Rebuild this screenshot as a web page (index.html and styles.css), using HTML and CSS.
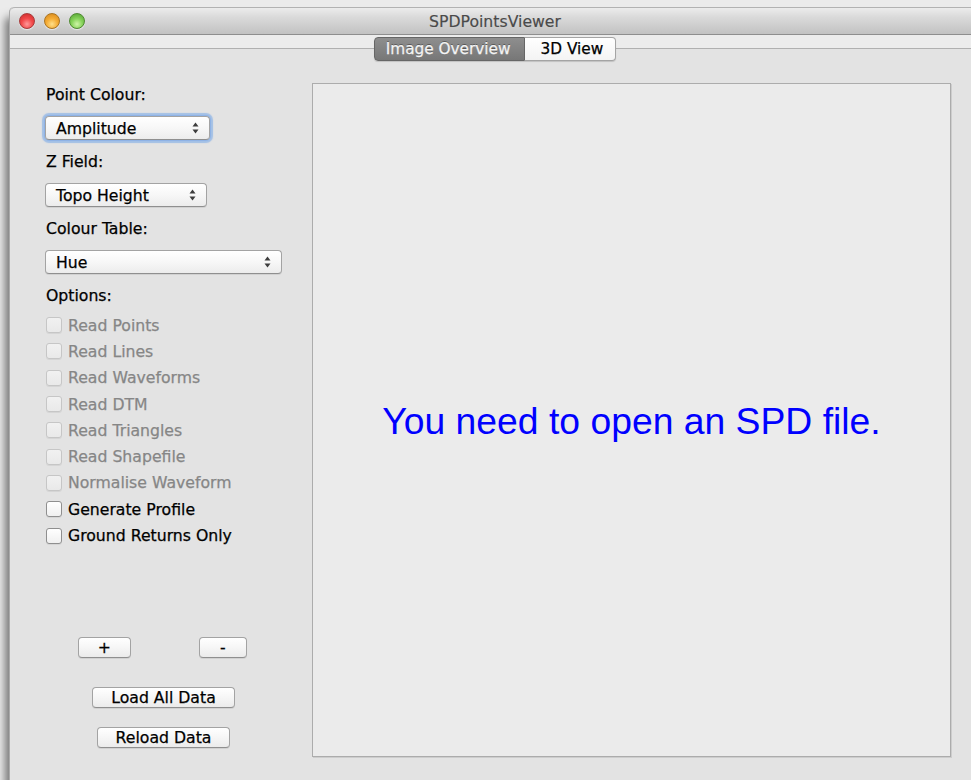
FILE: index.html
```html
<!DOCTYPE html>
<html lang="en">
<head>
<meta charset="utf-8">
<title>SPDPointsViewer</title>
<link rel="stylesheet" href="styles.css">
</head>
<body>
<div class="desktop">
  <div class="window">
    <header class="titlebar">
      <div class="lights">
        <span class="light close"></span>
        <span class="light minimise"></span>
        <span class="light zoom"></span>
      </div>
      <div class="title">SPDPointsViewer</div>
      <div></div>
    </header>

    <div class="tabstrip">
      <div class="tabs">
        <span class="tab active">Image Overview</span>
        <span class="tab">3D View</span>
      </div>
    </div>

    <main class="content">
      <aside class="controls">
        <div class="field-label">Point Colour:</div>
        <div class="popup focused w-amp">
          <span>Amplitude</span>
          <svg class="arrows" width="7" height="12" viewBox="0 0 7 12"><path d="M3.5 0.5 L6.5 4.5 H0.5 Z M3.5 11.5 L6.5 7.5 H0.5 Z" fill="#3c3c3c"/></svg>
        </div>

        <div class="field-label">Z Field:</div>
        <div class="popup w-topo">
          <span>Topo Height</span>
          <svg class="arrows" width="7" height="12" viewBox="0 0 7 12"><path d="M3.5 0.5 L6.5 4.5 H0.5 Z M3.5 11.5 L6.5 7.5 H0.5 Z" fill="#3c3c3c"/></svg>
        </div>

        <div class="field-label">Colour Table:</div>
        <div class="popup w-hue">
          <span>Hue</span>
          <svg class="arrows" width="7" height="12" viewBox="0 0 7 12"><path d="M3.5 0.5 L6.5 4.5 H0.5 Z M3.5 11.5 L6.5 7.5 H0.5 Z" fill="#3c3c3c"/></svg>
        </div>

        <div class="field-label">Options:</div>
        <ul class="options">
          <li class="option disabled"><span class="box"></span>Read Points</li>
          <li class="option disabled"><span class="box"></span>Read Lines</li>
          <li class="option disabled"><span class="box"></span>Read Waveforms</li>
          <li class="option disabled"><span class="box"></span>Read DTM</li>
          <li class="option disabled"><span class="box"></span>Read Triangles</li>
          <li class="option disabled"><span class="box"></span>Read Shapefile</li>
          <li class="option disabled"><span class="box"></span>Normalise Waveform</li>
          <li class="option"><span class="box"></span>Generate Profile</li>
          <li class="option"><span class="box"></span>Ground Returns Only</li>
        </ul>

        <div class="zoom-row">
          <button class="btn w-plus">+</button>
          <button class="btn w-minus">-</button>
        </div>
        <div class="actions">
          <button class="btn w-load">Load All Data</button>
          <button class="btn w-reload">Reload Data</button>
        </div>
      </aside>

      <section class="canvas">
        <p class="notice">You need to open an SPD file.</p>
      </section>
    </main>
  </div>
</div>
</body>
</html>
```

FILE: styles.css
```css
html, body {
  margin: 0;
  padding: 0;
  width: 971px;
  height: 780px;
  overflow: hidden;
}

body {
  font-family: "DejaVu Sans", "Liberation Sans", sans-serif;
  font-size: 15.7px;
  color: #000;
  -webkit-text-stroke: 0.25px currentColor;
}

.desktop {
  height: 780px;
  box-sizing: border-box;
  padding: 7px 0 0 9px;
  background: #ebebeb;
  overflow: hidden;
}

.window {
  width: 970px;
  height: 800px;
  display: flex;
  flex-direction: column;
  border-radius: 5px 5px 0 0;
  background: #e3e3e3;
  border-left: 1px solid #a9a9a9;
  box-shadow: -4px 10px 8px rgba(0, 0, 0, 0.5);
}

/* title bar */
.titlebar {
  height: 26px;
  display: grid;
  grid-template-columns: 1fr auto 1fr;
  align-items: center;
  border-top: 1px solid #b2b2b2;
  border-bottom: 1px solid #8e8e8e;
  border-radius: 5px 5px 0 0;
  background: linear-gradient(#ececec, #dadada 35%, #c2c2c2);
}

.lights {
  display: flex;
  gap: 9px;
  padding-left: 9px;
}

.light {
  width: 14px;
  height: 14px;
  border-radius: 50%;
  box-shadow: 0 1px 1px rgba(255, 255, 255, 0.6);
}

.light.close {
  border: 1px solid #a83b3b;
  background: radial-gradient(circle at 50% 72%, #ff9a9a 0, #f2494a 45%, #c82727 100%);
}

.light.minimise {
  border: 1px solid #aa7420;
  background: radial-gradient(circle at 50% 72%, #ffe08a 0, #f5ad36 45%, #d4861b 100%);
}

.light.zoom {
  border: 1px solid #4f8a31;
  background: radial-gradient(circle at 50% 72%, #cff5a8 0, #86d35a 45%, #4f9e2f 100%);
}

.title {
  color: #4a4a4a;
  font-size: 15.7px;
  padding-top: 1px;
  -webkit-text-stroke: 0.15px currentColor;
}

/* tab bar */
.tabstrip {
  height: 13px;
  display: flex;
  justify-content: center;
  background: #ececec;
  border-bottom: 1px solid #b0b0b0;
}

.tabs {
  position: relative;
  z-index: 1;
  display: flex;
  height: 24px;
  margin-top: 2px;
  border-radius: 4px;
  box-shadow: 0 1px 1px rgba(0, 0, 0, 0.15);
}

.tab {
  display: flex;
  align-items: center;
  box-sizing: border-box;
  height: 24px;
  font-size: 15.3px;
  border: 1px solid #a4a4a4;
  background: linear-gradient(#ffffff, #f4f4f4);
  color: #000;
  padding: 0 12px 0 16px;
  border-radius: 0 4px 4px 0;
  border-left: none;
}

.tab.active {
  color: #f4f4f4;
  text-shadow: 0 -1px 0 rgba(0, 0, 0, 0.35);
  background: linear-gradient(#8e8e8e, #777777);
  border: 1px solid #666;
  border-radius: 4px 0 0 4px;
  padding: 0 13px 0 11px;
}

/* main area */
.content {
  flex: 1;
  display: flex;
  align-items: flex-start;
  padding-top: 34px;
}

.controls {
  width: 302px;
  box-sizing: border-box;
  padding: 3px 0 0 35px;
  display: flex;
  flex-direction: column;
}

.field-label {
  height: 18px;
  line-height: 18px;
  margin-left: 1px;
  white-space: nowrap;
}

.popup {
  display: flex;
  align-items: center;
  justify-content: space-between;
  box-sizing: border-box;
  height: 24px;
  margin: 12px 0 13px;
  padding: 0 10px 0 10px;
  border: 1px solid #a3a3a3;
  border-bottom-color: #8f8f8f;
  border-radius: 4px;
  background: linear-gradient(#ffffff, #f7f7f7 50%, #ececec);
  box-shadow: 0 1px 0 rgba(0, 0, 0, 0.08);
}

.popup.focused {
  box-shadow: 0 0 0 1px #8fb3e6, 0 0 1px 3px rgba(120, 168, 232, 0.6);
}

.w-amp { width: 165px; }
.w-topo { width: 162px; }
.w-hue { width: 237px; }

.arrows {
  flex: none;
}

/* option check boxes */
.options {
  list-style: none;
  margin: 7px 0 0 0;
  padding: 0;
}

.option {
  height: 26.3px;
  display: flex;
  align-items: center;
  gap: 6px;
  padding-left: 1px;
  white-space: nowrap;
}

.box {
  width: 14px;
  height: 14px;
  border: 1px solid #8f8f8f;
  border-radius: 3px;
  background: linear-gradient(#ffffff, #f0f0f0);
  box-shadow: 0 1px 0 rgba(0, 0, 0, 0.06);
  flex: none;
}

.option.disabled {
  color: #868686;
}

.option.disabled .box {
  border-color: #c6c6c6;
  background: linear-gradient(#f1f1f1, #e9e9e9);
}

/* push buttons */
.zoom-row {
  width: 237px;
  display: grid;
  grid-template-columns: 1fr 1fr;
  justify-items: center;
  margin-top: 88px;
}

.actions {
  width: 237px;
  display: flex;
  flex-direction: column;
  align-items: center;
  gap: 19px;
  margin-top: 29px;
}

.btn {
  font-family: "DejaVu Sans", "Liberation Sans", sans-serif;
  font-size: 15.7px;
  color: #000;
  -webkit-text-stroke: 0.25px currentColor;
  height: 21px;
  padding: 0;
  line-height: 19px;
  border: 1px solid #a3a3a3;
  border-bottom-color: #8f8f8f;
  border-radius: 4px;
  background: linear-gradient(#ffffff, #f6f6f6 50%, #ebebeb);
  box-shadow: 0 1px 0 rgba(0, 0, 0, 0.08);
}

.w-plus { width: 53px; }
.w-minus { width: 48px; }
.w-load { width: 143px; }
.w-reload { width: 133px; }

/* drawing area */
.canvas {
  width: 639px;
  height: 674px;
  box-sizing: border-box;
  display: flex;
  align-items: center;
  justify-content: center;
  background: #ebebeb;
  border: 1px solid #acacac;
  box-shadow: 1px 1px 0 #cdcdcd;
}

.notice {
  margin: 2px 0 0 0;
  font-family: "Liberation Sans", Arial, sans-serif;
  font-size: 37.3px;
  color: #0000ff;
  -webkit-text-stroke: 0;
}
```
